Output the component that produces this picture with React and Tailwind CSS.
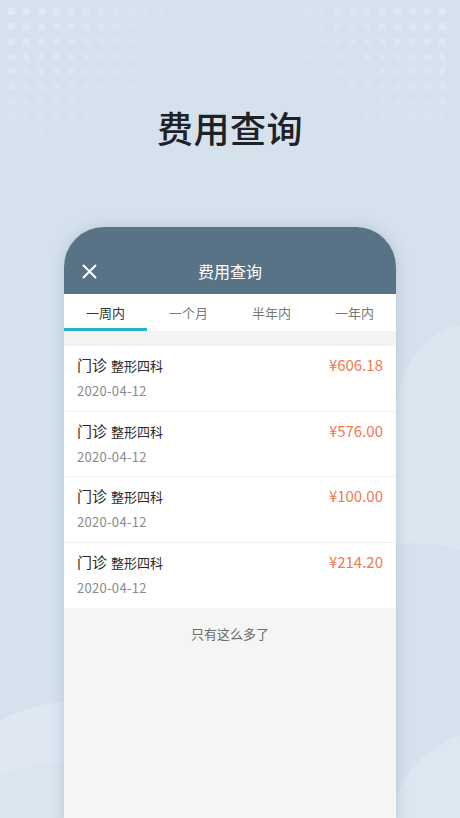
import React, { useState } from "react";

const font = { fontFamily: '"Noto Sans CJK SC", "Noto Sans", Roboto, sans-serif' };

const records = [
  { type: "门诊", dept: "整形四科", date: "2020-04-12", amount: "¥606.18" },
  { type: "门诊", dept: "整形四科", date: "2020-04-12", amount: "¥576.00" },
  { type: "门诊", dept: "整形四科", date: "2020-04-12", amount: "¥100.00" },
  { type: "门诊", dept: "整形四科", date: "2020-04-12", amount: "¥214.20" },
];

const tabs = ["一周内", "一个月", "半年内", "一年内"];

// faint dot grid in the top corners
const Dots = ({ className, flip }) => {
  const cells = [];
  for (let r = 0; r < 9; r++) {
    for (let c = 0; c < 13; c++) {
      const fade = flip ? c / 12 : 1 - c / 12;
      const op = Math.max(0, fade * (1 - r / 10) * 0.28);
      cells.push(
        <rect key={r + "-" + c} x={c * 15} y={r * 15} width="7" height="7" rx="1.5" fill="#ffffff" opacity={op} />
      );
    }
  }
  return (
    <svg className={className} width="195" height="135" viewBox="0 0 195 135">
      {cells}
    </svg>
  );
};

export default function App() {
  const [active, setActive] = useState(0);

  return (
    <div className="relative w-[460px] h-[818px] overflow-hidden bg-[#d5e2ed]" style={font}>
      {/* background decoration */}
      <Dots className="absolute left-[8px] top-[8px]" />
      <Dots className="absolute right-[6px] top-[8px]" flip />
      <svg className="absolute left-0 top-0" width="460" height="818" viewBox="0 0 460 818">
        <path d="M0 720 C 40 700, 90 695, 140 705 L 140 818 L 0 818 Z" fill="#e0e9f2" opacity="0.8" />
        <path d="M0 775 C 40 760, 90 758, 140 765 L 140 818 L 0 818 Z" fill="#d8e4ee" opacity="0.7" />
        <path d="M460 325 C 430 330, 405 360, 396 400 L 396 545 C 420 540, 440 545, 460 550 Z" fill="#dde7f0" opacity="0.8" />
        <path d="M460 735 C 430 745, 405 770, 396 800 L 396 818 L 460 818 Z" fill="#dfe8f1" opacity="0.8" />
      </svg>

      <div className="relative flex flex-col items-center">
        <h1 className="mt-[103px] text-[36px] leading-[48px] font-medium tracking-[0.5px] text-[#1e2226]">
          费用查询
        </h1>

        {/* phone frame */}
        <div className="mt-[76px] w-[332px] h-[600px] rounded-t-[40px] overflow-hidden bg-[#f5f5f5] shadow-[0_0_14px_rgba(80,110,140,0.25)]">
          <div className="relative h-[67px] bg-[#587286] flex items-end justify-center pb-[11px]">
            <svg className="absolute left-[18px] bottom-[15px]" width="15" height="15" viewBox="0 0 15 15">
              <path d="M1.5 1.5 L13.5 13.5 M13.5 1.5 L1.5 13.5" stroke="#ffffff" strokeWidth="2" strokeLinecap="round" />
            </svg>
            <span className="text-white text-[16px] leading-[24px]">费用查询</span>
          </div>

          <div className="grid grid-cols-4 h-[37px] bg-white">
            {tabs.map((t, i) => (
              <button
                key={t}
                onClick={() => setActive(i)}
                className="relative flex items-center justify-center text-[13px]"
              >
                <span className={i === active ? "text-[#333333]" : "text-[#777777]"}>{t}</span>
                {i === active && <span className="absolute left-0 right-0 bottom-0 h-[3px] bg-[#21b7c9]" />}
              </button>
            ))}
          </div>

          <div className="h-[15px] bg-[#f3f3f3]" />

          <div className="bg-white">
            {records.map((r, i) => (
              <div
                key={i}
                className={
                  "flex justify-between px-[13px] pt-[8px] h-[65.5px] " +
                  (i < records.length - 1 ? "border-b border-[#efefef]" : "")
                }
              >
                <div className="flex flex-col">
                  <div className="flex items-baseline gap-[4px] text-[#2a2a2a] leading-[21px]">
                    <span className="text-[15px]">{r.type}</span>
                    <span className="text-[13px]">{r.dept}</span>
                  </div>
                  <span className="mt-[6px] text-[13px] leading-[18px] text-[#8a8a8a] tracking-[0.3px]">{r.date}</span>
                </div>
                <span className="text-[15px] leading-[21px] text-[#f07a4f]">{r.amount}</span>
              </div>
            ))}
          </div>

          <p className="pt-[17px] text-center text-[13px] leading-[18px] text-[#6b6b6b]">只有这么多了</p>
        </div>
      </div>
    </div>
  );
}
